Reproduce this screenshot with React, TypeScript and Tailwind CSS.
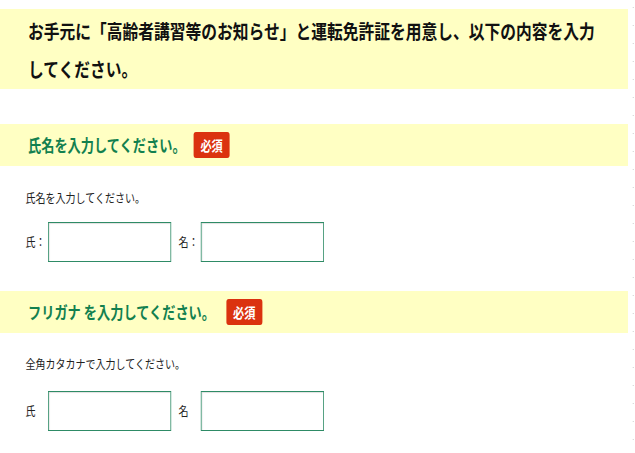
import React from "react"

// The reference is rendered narrow: the page is laid out at 794px and squeezed to 635px.

function Badge({ wide }: { wide?: boolean }) {
  return (
    <span
      className={
        wide
          ? "ml-[14px] inline-flex h-[26px] w-[45px] items-center justify-center rounded-[3px] bg-[#db320f] text-[14px] font-bold leading-none text-white"
          : "ml-[10px] inline-flex h-[26px] w-[45px] items-center justify-center rounded-[3px] bg-[#db320f] text-[14px] font-bold leading-none text-white"
      }
    >
      必須
    </span>
  )
}

function SectionTitle({ children, wide }: { children: React.ReactNode; wide?: boolean }) {
  return (
    <div className="flex h-[42px] items-center bg-[#ffffc3] pl-[35px]">
      <span className="text-[16.5px] font-bold leading-none text-[#12804f]">{children}</span>
      <Badge wide={wide} />
    </div>
  )
}

function NameRow({ colon }: { colon: boolean }) {
  return (
    <div className="flex items-center pl-[32px] text-[12.5px] text-[#222]">
      <span className="mr-[4px] w-[24px]">{colon ? "氏：" : "氏"}</span>
      <input className="h-[40px] w-[154px] border border-[#2e8b66] bg-white shadow-[inset_1px_1px_1px_rgba(0,0,0,0.12)] outline-none" />
      <span className="ml-[9px] mr-[4px] w-[24px]">{colon ? "名：" : "名"}</span>
      <input className="h-[40px] w-[154px] border border-[#2e8b66] bg-white shadow-[inset_1px_1px_1px_rgba(0,0,0,0.12)] outline-none" />
    </div>
  )
}

export default function App() {
  return (
    <div className="h-[453px] w-full overflow-hidden bg-white">
      <div
        className="flex w-[794px] origin-top-left scale-x-[0.8] pt-[9px]"
        style={{ fontFamily: '"Noto Sans CJK JP", "Noto Sans", sans-serif' }}
      >
        <div className="w-[785px]">
          <div className="bg-[#ffffc3] pt-[3px] pb-[1px] pl-[35px] pr-[35px] text-[19.7px] font-bold leading-[38px] text-[#111]">
            お手元に「高齢者講習等のお知らせ」と運転免許証を用意し、以下の内容を入力してください。
          </div>

          <div className="mt-[35px]">
            <SectionTitle>氏名を入力してください。</SectionTitle>
            <p className="mt-[23px] pl-[32px] text-[12.5px] leading-[18px] text-[#222]">氏名を入力してください。</p>
            <div className="mt-[15px]">
              <NameRow colon />
            </div>
          </div>

          <div className="mt-[29px]">
            <SectionTitle wide>フリガナ を入力してください。</SectionTitle>
            <p className="mt-[22px] pl-[32px] text-[12.5px] leading-[18px] text-[#222]">全角カタカナで入力してください。</p>
            <div className="mt-[18px]">
              <NameRow colon={false} />
            </div>
          </div>
        </div>
        <div className="ml-[6px] -mt-[9px] h-[453px] w-[1px] bg-[repeating-linear-gradient(to_bottom,transparent_0px,transparent_7px,#c4c4c4_7px,#c4c4c4_8px,transparent_8px,transparent_18px)]" />
      </div>
    </div>
  )
}
